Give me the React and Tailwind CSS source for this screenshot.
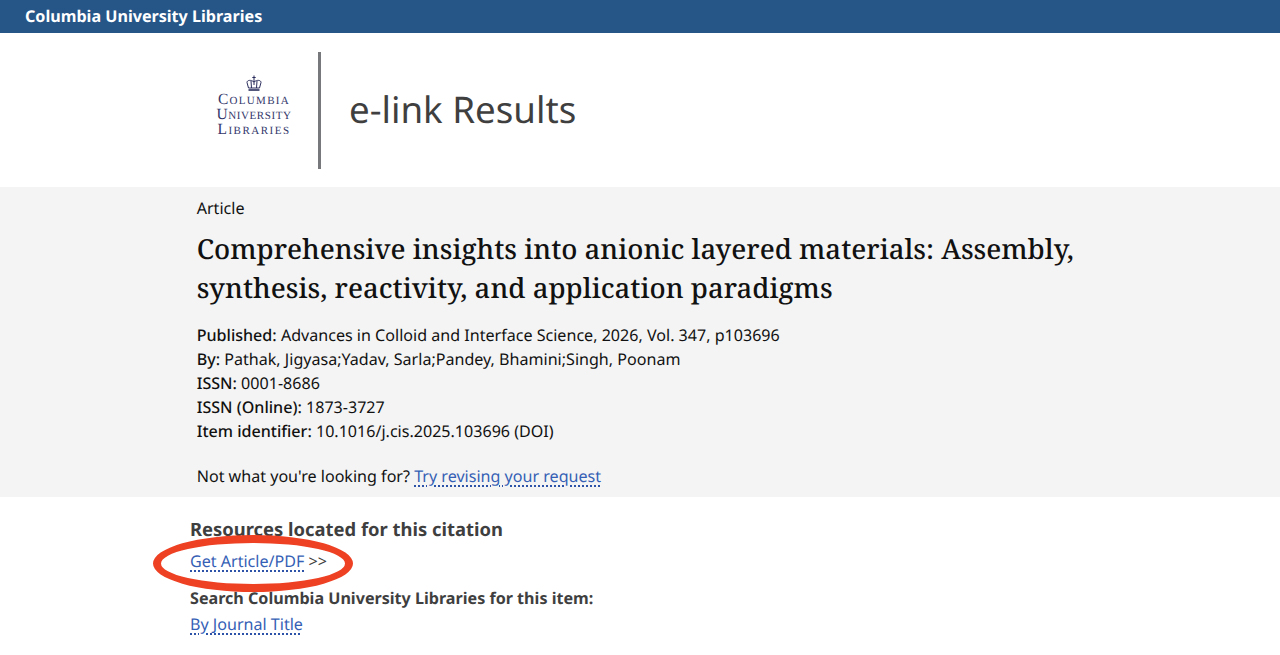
const Dotted = ({ children }) => (
  <a href="#" className="text-[#3560b5] underline decoration-dotted decoration-[#2c53a8] decoration-[1.5px] underline-offset-[3px]">
    {children}
  </a>
);

const Logo = () => (
  <div className="flex flex-col items-center w-[74px] text-[#34386b] font-['Liberation_Serif',serif] text-[15.5px] leading-[15px] font-light">
    <svg width="16" height="17" viewBox="0 0 16 17" className="mt-[-8px]" fill="none" stroke="#2a2d5c" strokeWidth="1">
      <path d="M8 0.5 V10 M6.3 2.5 H9.7" />
      <path d="M2.5 13 L1 7.5 C1 5 5 4.5 8 7 C11 4.5 15 5 15 7.5 L13.5 13 Z" />
      <path d="M5 6 L5.5 13 M11 6 L10.5 13" />
      <path d="M2.5 15 H13.5" strokeWidth="1.6" />
    </svg>
    <span className="tracking-[1.3px]" style={{ fontVariant: "small-caps" }}>Columbia</span>
    <span className="tracking-[0.6px]" style={{ fontVariant: "small-caps" }}>University</span>
    <span className="tracking-[1.5px]" style={{ fontVariant: "small-caps" }}>Libraries</span>
  </div>
);

const Meta = ({ label, children }) => (
  <div className="h-6">
    <span className="font-medium">{label}</span> {children}
  </div>
);

export default function App() {
  return (
    <div className="font-['Noto_Sans',sans-serif] [text-rendering:geometricPrecision] text-[16.08px] bg-white h-[655px] overflow-hidden">
      <div className="h-[33px] bg-[#265688] text-white font-bold text-[16.13px] pl-[25px] leading-[33px]">
        Columbia University Libraries
      </div>
      <div className="h-[154px] flex items-center pl-[217px]">
        <Logo />
        <div className="w-[3px] h-[117px] bg-[#77787c] ml-[27px]" />
        <h1 className="ml-[28px] text-[36.7px] text-[#3f3f3f]">e-link Results</h1>
      </div>
      <div className="h-[310px] bg-[#f4f4f4] pl-[196.7px] pt-[9px] text-[#111]">
        <div className="h-6">Article</div>
        <h2 className="mt-[10px] w-[900px] font-['Noto_Serif',serif] text-[27.55px] leading-[39px] font-medium">
          Comprehensive insights into anionic layered materials: Assembly, synthesis, reactivity, and application paradigms
        </h2>
        <div className="mt-[15px]">
          <Meta label="Published:">Advances in Colloid and Interface Science, 2026, Vol. 347, p103696</Meta>
          <Meta label="By:">Pathak, Jigyasa;Yadav, Sarla;Pandey, Bhamini;Singh, Poonam</Meta>
          <Meta label="ISSN:">0001-8686</Meta>
          <Meta label="ISSN (Online):">1873-3727</Meta>
          <Meta label="Item identifier:">10.1016/j.cis.2025.103696 (DOI)</Meta>
        </div>
        <div className="mt-[21px]">
          Not what you're looking for? <Dotted>Try revising your request</Dotted>
        </div>
      </div>
      <div className="pl-[190px] pt-[20px] text-[#3f3f3f]">
        <h3 className="text-[18.4px] font-bold leading-[26px]">Resources located for this citation</h3>
        <div className="relative mt-[6px] h-6">
          <Dotted>Get Article/PDF</Dotted> &gt;&gt;
          <div className="absolute left-[-37px] top-[-14px] w-[200px] h-[57px] rounded-[50%] border-[8px] border-[#ee4023]" />
        </div>
        <div className="mt-[13px] font-bold text-[16.13px]">Search Columbia University Libraries for this item:</div>
        <div className="mt-[2px]">
          <Dotted>By Journal Title</Dotted>
        </div>
      </div>
    </div>
  );
}
